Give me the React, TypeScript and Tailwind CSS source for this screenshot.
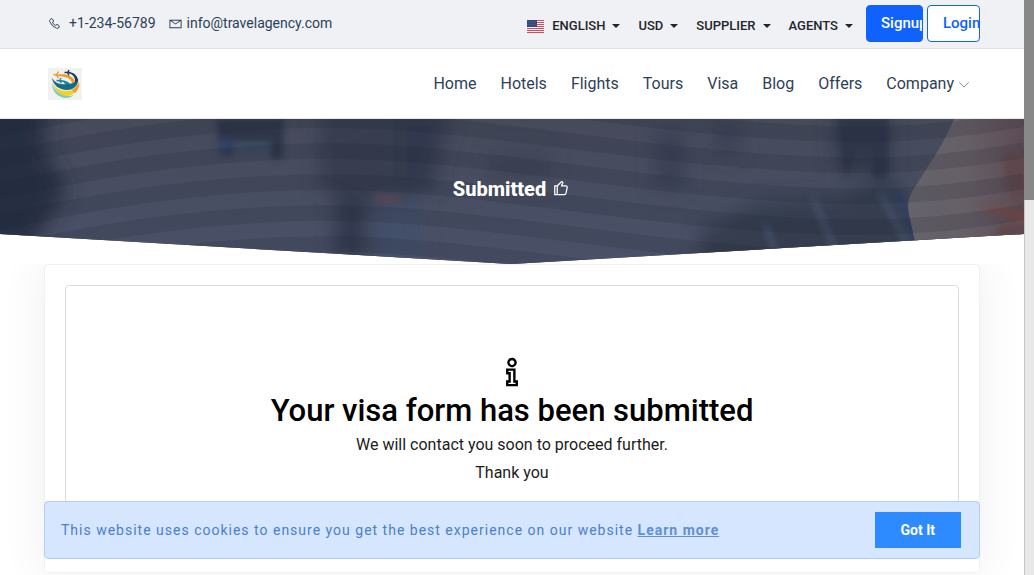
import React from "react";
import {
  LiaPhoneSolid,
  LiaEnvelope,
  LiaThumbsUp,
  LiaInfoSolid,
  LiaAngleDownSolid,
} from "react-icons/lia";

const topMenus = ["USD", "SUPPLIER", "AGENTS"];
const navLinks = ["Home", "Hotels", "Flights", "Tours", "Visa", "Blog", "Offers"];
const bands = [-2, -1, 0, 1, 2, 3, 4];

function Caret() {
  return (
    <svg className="ml-[7px] h-1 w-2" viewBox="0 0 8 4" aria-hidden="true">
      <path d="M0 0h8L4 4z" fill="currentColor" />
    </svg>
  );
}

function Flag() {
  return (
    <svg className="mr-2 h-[13px] w-[17px]" viewBox="0 0 17 13" aria-hidden="true">
      <path fill="#f5f3f5" d="M0 0h17v13H0z" />
      <path
        stroke="#c9515f"
        d="M0 .5h17M0 2.5h17M0 4.5h17M0 6.5h17M0 8.5h17M0 10.5h17M0 12.5h17"
      />
      <path fill="#2f4377" d="M0 0h10v7H0z" />
      <path
        stroke="#8794b8"
        strokeWidth=".6"
        strokeDasharray=".8 1.2"
        d="M.6 1.2h9M1.4 2.8h8M.6 4.4h9M1.4 6h8"
      />
    </svg>
  );
}

function Logo() {
  return (
    <svg className="h-8 w-[34px]" viewBox="0 0 34 32" role="img" aria-label="Travel agency">
      <path fill="#f1f1f0" d="M0 0h34v32H0z" />
      <path fill="#7fcdca" d="M4 15c0 8 5 14 13 15 4 0 7-1 9-3-3 1-7 1-11-1C9 24 5 20 4 15z" />
      <path fill="#f5d21d" d="M4 13c2 7 8 10 15 10 6 0 10-4 12-9 0 6-3 11-8 13C14 30 6 23 4 13z" />
      <path fill="#f39a1e" d="M24 22c4-2 6-5 7-8 1 4-1 8-4 11-1-1-2-2-3-3z" />
      <path fill="#176a8c" d="M4 10c3 5 8 7 14 6 5 0 9-1 12-6 1 6-3 12-11 12C11 22 5 17 4 10z" />
      <path fill="#f39a1e" d="M9 7c7-2 15 0 18 6-1 2-2 2-3 2-1-5-7-7-15-7z" />
      <path fill="#1f3a5f" d="M20 4c6 0 10 4 10 9l-3 2c1-5-2-9-7-10z" />
      <path fill="#1c8b93" d="M11 12c5 0 9 1 11 4h-5c-1-2-3-3-6-3z" />
      <path
        fill="none"
        stroke="#f39a1e"
        strokeWidth="1.4"
        d="M5.5 6.5 12 7.5M10.5 3.5 8.5 7l2 3.2"
      />
      <path fill="none" stroke="#1f3a5f" strokeWidth="1.3" d="M16.5 4.5h6M21 2l-1.5 2.5L21 7.5" />
      <path fill="none" stroke="#1c8b93" strokeWidth="1.3" d="m8.5 12.5 6 .5M13 10l-1.5 2.8 2 2.2" />
    </svg>
  );
}

function HeroArt() {
  return (
    <svg
      className="absolute inset-0 h-full w-full"
      viewBox="0 0 1024 145"
      preserveAspectRatio="none"
      aria-hidden="true"
    >
      <defs>
        <filter id="soft" x="-20%" y="-20%" width="140%" height="140%">
          <feGaussianBlur stdDeviation="10" />
        </filter>
        <filter id="fine" x="-20%" y="-20%" width="140%" height="140%">
          <feGaussianBlur stdDeviation="3" />
        </filter>
        <linearGradient id="base" x1="0" y1="0" x2="0" y2="1">
          <stop offset="0" stopColor="#464a5b" />
          <stop offset="1" stopColor="#4a5168" />
        </linearGradient>
        <linearGradient id="arm" x1="0" y1="0" x2="1" y2="0">
          <stop offset="0" stopColor="#65636c" />
          <stop offset=".5" stopColor="#665f66" />
          <stop offset="1" stopColor="#5e4c54" />
        </linearGradient>
      </defs>
      <path fill="url(#base)" d="M0 0h1024v145H0z" />
      <g filter="url(#soft)">
        <path fill="#272d43" d="M-30-20h78l-4 50 24 42-40 60h-58z" />
        <path fill="#373e50" d="M320-20h135l-20 80-40 30-75-20z" />
        <path fill="#31374d" d="M400 0h35v70h-35zM335 75h32v65h-32z" />
        <path fill="#43506a" d="M375 80h45v60h-45z" />
        <path fill="#3f4456" d="M490 30h60v35h-60z" />
        <path fill="#3b4154" d="M655 10h30v60h-30zM715 0h25v35h-25z" />
        <path fill="#30374b" d="M835-10h55v60h-55z" />
        <path fill="#343d4f" d="m700 110 60-28 80-4 50-25 40 80-100 25H700z" />
      </g>
      <g filter="url(#fine)">
        <path fill="#2f364a" d="M216 0h68v20h-1v20h-12V22h-38v15h-13z" />
        <path fill="#3b4b62" d="M236 24h34v12h-34z" />
        <path fill="#2d4470" d="M221 20h9v12h-9z" />
        <path fill="#524653" d="M372 76h32l-6 9h-20z" />
        <path fill="#2e344a" d="M838 0h50v60h-16V28h-14l-12 32z" />
        <path
          fill="none"
          stroke="#43516b"
          strokeWidth="6"
          strokeOpacity=".8"
          d="m812 76 26 62M880 74l34 62M765 105l12 32"
        />
        <path stroke="#2e3d63" strokeWidth="6" fill="none" d="m895 70 26 55" />
      </g>
      <path fill="url(#arm)" d="M954 0c-9 23-23 42-35 62-11 15-13 22-9 38l10 45h104V0z" />
      <g filter="url(#fine)">
        <path fill="#7a4a49" d="m976 88 24 1 30 5v12l-26-9z" />
        <path fill="#5f464e" d="M1002 35h30v45h-22zM1000 106h30v30h-40z" />
      </g>
      <g fill="none" stroke="#1d2330" strokeOpacity=".15" strokeWidth="15.5">
        {bands.map((n) => (
          <path
            key={n}
            transform={`translate(0 ${32 + n * 31})`}
            d="M0 40C120 14 220 0 330 0s230 22 360 35 220 16 334-5"
          />
        ))}
      </g>
    </svg>
  );
}

export default function App() {
  return (
    <div className="flex h-screen overflow-hidden bg-white font-['Roboto',sans-serif]">
      <div className="relative min-w-0 flex-1 overflow-hidden">
        <header>
          <div className="flex h-[49px] items-start justify-between border-b border-[#e0e2e8] bg-[#eff1f5] pr-11 pl-12">
            <address className="flex gap-3 pt-3 text-sm leading-[22px] text-[#2d3f57] not-italic">
              <a href="tel:+1-234-56789" className="flex items-center gap-2">
                <LiaPhoneSolid className="size-[13px]" />
                +1-234-56789
              </a>
              <a href="mailto:info@travelagency.com" className="flex items-center gap-1">
                <LiaEnvelope className="size-[15px]" />
                info@travelagency.com
              </a>
            </address>
            <div className="flex items-start pt-[5px]">
              <div className="mr-[13px] flex h-[42px] items-center gap-[18px] text-[13px] font-medium text-[#222529]">
                <button type="button" className="flex items-center">
                  <Flag />
                  ENGLISH
                  <Caret />
                </button>
                {topMenus.map((label) => (
                  <button key={label} type="button" className="flex items-center">
                    {label}
                    <Caret />
                  </button>
                ))}
              </div>
              <div className="flex gap-1 text-left text-[15px] font-medium">
                <a
                  href="#signup"
                  className="h-[37px] w-[57px] overflow-hidden rounded border border-[#0f62fe] bg-[#0f62fe] pl-3.5 leading-[35px] text-white"
                >
                  Signup
                </a>
                <a
                  href="#login"
                  className="h-[37px] w-[53px] overflow-hidden rounded border border-[#0f62fe] bg-white pl-[15px] leading-[35px] text-[#0f62fe]"
                >
                  Login
                </a>
              </div>
            </div>
          </div>
          <div className="flex h-[70px] items-center justify-between border-b border-[#e8e8ea] pr-[54px] pl-12">
            <a href="#home">
              <Logo />
            </a>
            <nav className="flex gap-6 text-base text-[#2d3f57]">
              {navLinks.map((label) => (
                <a key={label} href={`#${label.toLowerCase()}`}>
                  {label}
                </a>
              ))}
              <a href="#company" className="flex items-center gap-1">
                Company
                <LiaAngleDownSolid className="size-3 text-[#7c8796]" />
              </a>
            </nav>
          </div>
        </header>

        <section className="relative h-[145px] overflow-hidden bg-[#41475a] [clip-path:polygon(0_0,100%_0,100%_calc(100%-30px),50%_100%,0_calc(100%-30px))]">
          <HeroArt />
          <h1 className="relative flex h-[140px] items-center justify-center gap-[5px] text-xl font-extrabold text-white">
            Submitted
            <LiaThumbsUp className="size-5" />
          </h1>
        </section>

        <main className="overflow-hidden px-11 pb-10">
          <div className="rounded border border-[#f1f1f2] bg-white p-5 shadow-[0_0_40px_rgba(82,85,90,0.1)]">
            <div className="flex flex-col items-center rounded border border-[#dcdcdd] px-5 pt-[67px] pb-16 text-center text-black">
              <LiaInfoSolid className="size-[38px]" />
              <h2 className="text-[31px] leading-10 font-medium">
                Your visa form has been submitted
              </h2>
              <p className="text-base leading-7 text-[#1c1c1c]">
                We will contact you soon to proceed further.
                <br />
                Thank you
              </p>
            </div>
          </div>
        </main>

        <div
          role="alert"
          className="absolute inset-x-11 bottom-4 flex h-[58px] items-center justify-between rounded border border-[#b0cfff] bg-[#d6e6ff] pr-[18px] pl-4"
        >
          <p className="text-sm tracking-[1px] text-[#4a7fcb]">
            This website uses cookies to ensure you get the best experience on our website{" "}
            <a href="#cookies" className="font-bold text-[#5f8fd3] underline">
              Learn more
            </a>
          </p>
          <button type="button" className="h-9 bg-[#2e8bff] px-[26px] text-sm font-bold text-white">
            Got It
          </button>
        </div>
      </div>

      <div className="w-2.5 border-l border-[#c4c4c4] bg-[#e8e8e8]" aria-hidden="true">
        <div className="-ml-px h-[200px] bg-[#888888]" />
      </div>
    </div>
  );
}
